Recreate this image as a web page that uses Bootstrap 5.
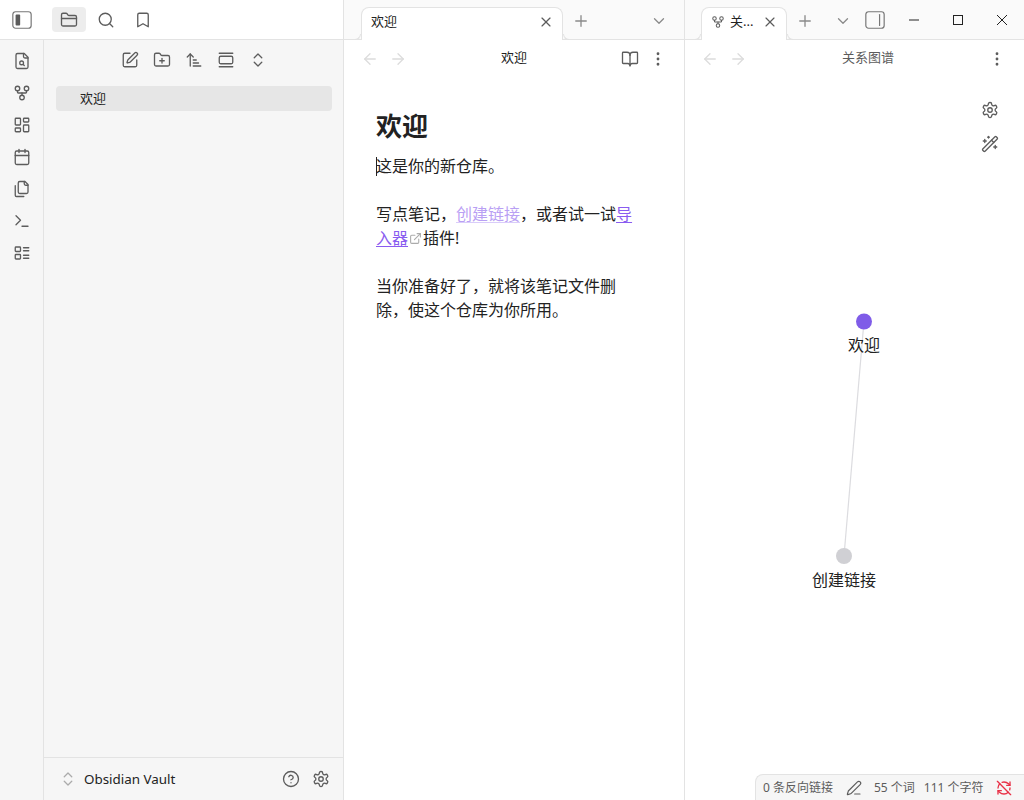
<!DOCTYPE html>
<html lang="zh-CN">
<head>
<meta charset="UTF-8">
<title>欢迎 - Obsidian Vault</title>
<link href="https://cdn.jsdelivr.net/npm/bootstrap@5.3.0/dist/css/bootstrap.min.css" rel="stylesheet">
<style>
html, body { height: 100%; overflow: hidden; }
body { font-family: "Noto Sans", "Noto Sans CJK SC", sans-serif; color: #222; background: #fff; }
.ic { width: 18px; height: 18px; fill: none; stroke: currentColor; stroke-width: 1.75; stroke-linecap: round; stroke-linejoin: round; flex: none; }
.ic-toggle { width: 22px; height: 22px; stroke-width: 1.3; color: #777; }
.toggle-fill { fill: #5c5c5c; stroke: none; }
.tool { display: inline-flex; align-items: center; justify-content: center; padding: 0; border: 0; border-radius: 4px; color: #5c5c5c; width: 26px; height: 26px; flex: none; }
.tool:hover { color: #222; }
.tool-on { background: #ededed; width: 34px; height: 25px; margin-left: 14px; }

.left-col { width: 344px; flex: none; border-right: 1px solid #e3e3e3; }
.top-left { height: 40px; flex: none; padding: 0 0 0 9px; gap: 3px; border-bottom: 1px solid #e3e3e3; }
.top-left .slot { width: 34px; }
.ribbon { width: 44px; flex: none; background: #f6f6f6; border-right: 1px solid #e3e3e3; padding-top: 8px; gap: 6px; }
.side { background: #f6f6f6; min-width: 0; }
.side-tools { height: 42px; padding-bottom: 2px; gap: 6px; }
.file-row { margin: 4px 11px 0 12px; height: 25px; padding-left: 24px; background: #e6e6e6; border-radius: 4px; font-size: 13px; }
.vault-row { height: 43px; border-top: 1px solid #e3e3e3; padding: 0 9px 0 15px; font-size: 13.4px; }
.vault-row .vault-name { margin-left: 7px; }
.vault-chev { color: #ababab; }

.pane-a { width: 341px; flex: none; border-right: 1px solid #e3e3e3; }
.pane-b { min-width: 0; flex: 1 1 auto; }
.tab-strip { height: 40px; flex: none; background: #fafafa; border-bottom: 1px solid #e3e3e3; padding-top: 7px; }
.tab-one { position: relative; height: 33px; background: #fff; border: 1px solid #e3e3e3; border-bottom: 0; border-radius: 8px 8px 0 0; font-size: 13px; padding: 0 8px 4px 9px; }
.tab-one::before, .tab-one::after { content: ""; position: absolute; bottom: 0; width: 6px; height: 6px; }
.tab-one::before { left: -7px; border-bottom: 1px solid #e3e3e3; border-right: 1px solid #e3e3e3; border-radius: 0 0 6px 0; }
.tab-one::after { right: -7px; border-bottom: 1px solid #e3e3e3; border-left: 1px solid #e3e3e3; border-radius: 0 0 0 6px; }
.tab-wide { margin-left: 17px; width: 202px; }
.tab-narrow { margin-left: 16px; width: 86px; }
.tab-fork { width: 14px; height: 14px; color: #5c5c5c; margin-right: 5px; }
.tab-x { color: #5c5c5c; width: 16px; height: 16px; }
.tab-x .ic { width: 16px; height: 16px; }
.strip-btn { color: #8a8a8a; margin-top: 1px; }
.strip-plus { margin-left: 5px; }
.strip-chev-a { margin-left: auto; margin-right: 12px; }
.strip-chev-b { margin-left: 12px; }
.strip-toggle { margin-left: 6px; }
.win-group { margin-top: -7px; }
.win-btn { color: #222; width: 44px; height: 40px; }
.view-head { height: 38px; flex: none; font-size: 13px; }
.pane-a .view-head { padding: 0 13px 0 17px; }
.pane-b .view-head { padding: 0 14px 0 16px; }
.view-title { flex: 1 1 auto; text-align: center; padding-bottom: 2px; }
.pane-a .view-title { padding-left: 4px; }
.pane-b .view-title { color: #5c5c5c; padding-left: 5px; }
.arrow-off { color: #dcdcdc; }
.arrow-next { margin-left: 10px; }
.more-gap { margin-left: 2px; }
.note { padding: 31px 0 0 32px; width: 292px; font-size: 16px; line-height: 24px; color: #222; }
.note h1 { font-size: 26px; font-weight: 700; line-height: 34px; margin: 0 0 11px; }
.note p { margin: 0 0 24px; }
.caret-line { display: inline-block; width: 1px; height: 19px; background: #222; margin-right: -1px; vertical-align: -4px; }
.link-new { color: #b9a0f4; text-decoration: underline; text-decoration-color: #d9ccfa; text-underline-offset: 2px; }
.link-out { color: #8a5cf0; text-decoration: underline; text-underline-offset: 2px; }
.out-ic { width: 13px; height: 13px; color: #ababab; stroke-width: 2; vertical-align: -1px; margin: 0 1px; }
.graph-wrap { position: relative; flex: 1 1 auto; min-height: 0; }
.graph-svg { position: absolute; left: 0; top: 0; width: 100%; height: 100%; }
.graph-svg text { font-size: 16px; fill: #222; text-anchor: middle; font-family: "Noto Sans CJK SC", sans-serif; }
.graph-ctl { position: absolute; top: 19px; right: 21px; gap: 8px; }
.status-line { position: absolute; right: 0; bottom: 0; height: 26px; width: 269px; background: #f6f6f6; border-top: 1px solid #e3e3e3; border-left: 1px solid #e3e3e3; border-radius: 8px 0 0 0; font-size: 12px; color: #5c5c5c; padding-left: 7px; white-space: nowrap; }
.status-line .ic { width: 16px; height: 16px; }
.st-pencil { margin: 0 12px 0 13px; }
.st-count { margin-left: 9px; }
.sync-off { color: #e93147; margin-left: 12px; stroke-width: 2; }
</style>
</head>
<body>
<svg width="0" height="0" class="d-none">
  <symbol id="i-folder" viewBox="0 0 24 24"><path d="M20 20a2 2 0 0 0 2-2V8a2 2 0 0 0-2-2h-7.9a2 2 0 0 1-1.69-.9L9.6 3.9A2 2 0 0 0 7.93 3H4a2 2 0 0 0-2 2v13a2 2 0 0 0 2 2Z"/><path d="M2 10h20"/></symbol>
  <symbol id="i-search" viewBox="0 0 24 24"><circle cx="11" cy="11" r="8"/><path d="m21 21-4.3-4.3"/></symbol>
  <symbol id="i-bookmark" viewBox="0 0 24 24"><path d="m19 21-7-4-7 4V5a2 2 0 0 1 2-2h10a2 2 0 0 1 2 2v16z"/></symbol>
  <symbol id="i-edit" viewBox="0 0 24 24"><path d="M12 3H5a2 2 0 0 0-2 2v14a2 2 0 0 0 2 2h14a2 2 0 0 0 2-2v-7"/><path d="M18.375 2.625a1 1 0 0 1 3 3l-9.013 9.014a2 2 0 0 1-.853.505l-2.873.84a.5.5 0 0 1-.62-.62l.84-2.873a2 2 0 0 1 .506-.852z"/></symbol>
  <symbol id="i-folder-plus" viewBox="0 0 24 24"><path d="M12 10v6"/><path d="M9 13h6"/><path d="M20 20a2 2 0 0 0 2-2V8a2 2 0 0 0-2-2h-7.9a2 2 0 0 1-1.69-.9L9.6 3.9A2 2 0 0 0 7.93 3H4a2 2 0 0 0-2 2v13a2 2 0 0 0 2 2Z"/></symbol>
  <symbol id="i-sort" viewBox="0 0 24 24"><path d="m3 8 4-4 4 4"/><path d="M7 4v16"/><path d="M11 12h4"/><path d="M11 16h7"/><path d="M11 20h10"/></symbol>
  <symbol id="i-reveal" viewBox="0 0 24 24"><path d="M3 3h18"/><path d="M3 21h18"/><rect x="3" y="7" width="18" height="10" rx="2"/></symbol>
  <symbol id="i-updown" viewBox="0 0 24 24"><path d="m7 15 5 5 5-5"/><path d="m7 9 5-5 5 5"/></symbol>
  <symbol id="i-file-search" viewBox="0 0 24 24"><path d="M15 2H6a2 2 0 0 0-2 2v16a2 2 0 0 0 2 2h12a2 2 0 0 0 2-2V7z"/><path d="M14 2v4a2 2 0 0 0 2 2h4"/><circle cx="11.5" cy="14.5" r="2.5"/><path d="m13.5 16.5 1.5 1.5"/></symbol>
  <symbol id="i-fork" viewBox="0 0 24 24"><circle cx="12" cy="18" r="3"/><circle cx="6" cy="6" r="3"/><circle cx="18" cy="6" r="3"/><path d="M18 9v2c0 .6-.4 1-1 1H7c-.6 0-1-.4-1-1V9"/><path d="M12 12v3"/></symbol>
  <symbol id="i-dash" viewBox="0 0 24 24"><rect x="3" y="3" width="7" height="9" rx="1"/><rect x="14" y="3" width="7" height="5" rx="1"/><rect x="14" y="12" width="7" height="9" rx="1"/><rect x="3" y="16" width="7" height="5" rx="1"/></symbol>
  <symbol id="i-cal" viewBox="0 0 24 24"><path d="M8 2v4"/><path d="M16 2v4"/><rect x="3" y="4" width="18" height="18" rx="2"/><path d="M3 10h18"/></symbol>
  <symbol id="i-files" viewBox="0 0 24 24"><path d="M20 7h-3a2 2 0 0 1-2-2V2"/><path d="M9 18a2 2 0 0 1-2-2V4a2 2 0 0 1 2-2h7l4 4v10a2 2 0 0 1-2 2Z"/><path d="M3 7.6v12.8A1.6 1.6 0 0 0 4.6 22h9.8"/></symbol>
  <symbol id="i-term" viewBox="0 0 24 24"><path d="m4 17 6-6-6-6"/><path d="M12 19h8"/></symbol>
  <symbol id="i-todo" viewBox="0 0 24 24"><rect x="3" y="4" width="7" height="6" rx="1"/><rect x="3" y="14" width="7" height="6" rx="1"/><path d="M14 5h7"/><path d="M14 9h7"/><path d="M14 15h7"/><path d="M14 19h7"/></symbol>
  <symbol id="i-x" viewBox="0 0 24 24"><path d="M18 6 6 18"/><path d="m6 6 12 12"/></symbol>
  <symbol id="i-plus" viewBox="0 0 24 24"><path d="M5 12h14"/><path d="M12 5v14"/></symbol>
  <symbol id="i-chev" viewBox="0 0 24 24"><path d="m6 9 6 6 6-6"/></symbol>
  <symbol id="i-left" viewBox="0 0 24 24"><path d="m12 19-7-7 7-7"/><path d="M19 12H5"/></symbol>
  <symbol id="i-right" viewBox="0 0 24 24"><path d="M5 12h14"/><path d="m12 5 7 7-7 7"/></symbol>
  <symbol id="i-book" viewBox="0 0 24 24"><path d="M12 7v14"/><path d="M3 18a1 1 0 0 1-1-1V4a1 1 0 0 1 1-1h5a4 4 0 0 1 4 4 4 4 0 0 1 4-4h5a1 1 0 0 1 1 1v13a1 1 0 0 1-1 1h-6a3 3 0 0 0-3 3 3 3 0 0 0-3-3z"/></symbol>
  <symbol id="i-more" viewBox="0 0 24 24"><circle cx="12" cy="12" r="1"/><circle cx="12" cy="5" r="1"/><circle cx="12" cy="19" r="1"/></symbol>
  <symbol id="i-gear" viewBox="0 0 24 24"><path d="M12.22 2h-.44a2 2 0 0 0-2 2v.18a2 2 0 0 1-1 1.73l-.43.25a2 2 0 0 1-2 0l-.15-.08a2 2 0 0 0-2.73.73l-.22.38a2 2 0 0 0 .73 2.73l.15.1a2 2 0 0 1 1 1.72v.51a2 2 0 0 1-1 1.74l-.15.09a2 2 0 0 0-.73 2.73l.22.38a2 2 0 0 0 2.73.73l.15-.08a2 2 0 0 1 2 0l.43.25a2 2 0 0 1 1 1.73V20a2 2 0 0 0 2 2h.44a2 2 0 0 0 2-2v-.18a2 2 0 0 1 1-1.73l.43-.25a2 2 0 0 1 2 0l.15.08a2 2 0 0 0 2.73-.73l.22-.39a2 2 0 0 0-.73-2.73l-.15-.08a2 2 0 0 1-1-1.74v-.5a2 2 0 0 1 1-1.74l.15-.09a2 2 0 0 0 .73-2.73l-.22-.38a2 2 0 0 0-2.73-.73l-.15.08a2 2 0 0 1-2 0l-.43-.25a2 2 0 0 1-1-1.73V4a2 2 0 0 0-2-2z"/><circle cx="12" cy="12" r="3"/></symbol>
  <symbol id="i-wand" viewBox="0 0 24 24"><path d="m21.64 3.64-1.28-1.28a1.21 1.21 0 0 0-1.72 0L2.36 18.64a1.21 1.21 0 0 0 0 1.72l1.28 1.28a1.2 1.2 0 0 0 1.72 0L21.64 5.36a1.2 1.2 0 0 0 0-1.72"/><path d="m14 7 3 3"/><path d="M5 6v4"/><path d="M19 14v4"/><path d="M10 2v2"/><path d="M7 8H3"/><path d="M21 16h-4"/><path d="M11 3H9"/></symbol>
  <symbol id="i-help" viewBox="0 0 24 24"><circle cx="12" cy="12" r="10"/><path d="M9.09 9a3 3 0 0 1 5.83 1c0 2-3 3-3 3"/><path d="M12 17h.01"/></symbol>
  <symbol id="i-pencil" viewBox="0 0 24 24"><path d="M13 21h8"/><path d="M21.174 6.812a1 1 0 0 0-3.986-3.987L3.842 16.174a2 2 0 0 0-.5.83l-1.321 4.352a.5.5 0 0 0 .623.622l4.353-1.32a2 2 0 0 0 .83-.497z"/></symbol>
  <symbol id="i-sync-off" viewBox="0 0 24 24"><path d="M21 8 18.74 5.74A9.75 9.75 0 0 0 12 3c-1 0-1.97.16-2.87.47"/><path d="M8 16H3v5"/><path d="M3 12c0-2.49 1-4.74 2.64-6.36"/><path d="m3 16 2.26 2.26A9.75 9.75 0 0 0 12 21c2.49 0 4.74-1 6.36-2.64"/><path d="M21 12c0 1-.16 1.97-.47 2.87"/><path d="M21 3v5h-5"/><path d="M22 22 2 2"/></symbol>
  <symbol id="i-ext" viewBox="0 0 24 24"><path d="M15 3h6v6"/><path d="M10 14 21 3"/><path d="M18 13v6a2 2 0 0 1-2 2H5a2 2 0 0 1-2-2V8a2 2 0 0 1 2-2h6"/></symbol>
</svg>

<div class="d-flex h-100">
  <!-- left: ribbon + file explorer -->
  <div class="left-col d-flex flex-column">
    <div class="top-left d-flex align-items-center">
      <button class="btn tool" type="button">
        <svg class="ic ic-toggle" viewBox="0 0 24 24"><rect x="2" y="3" width="20" height="18" rx="3"/><rect class="toggle-fill" x="5" y="6" width="5" height="12" rx="1"/></svg>
      </button>
      <button class="btn tool tool-on" type="button"><svg class="ic"><use href="#i-folder"/></svg></button>
      <button class="btn tool slot" type="button"><svg class="ic"><use href="#i-search"/></svg></button>
      <button class="btn tool slot" type="button"><svg class="ic"><use href="#i-bookmark"/></svg></button>
    </div>
    <div class="d-flex flex-grow-1 overflow-hidden">
      <div class="ribbon d-flex flex-column align-items-center">
        <button class="btn tool" type="button"><svg class="ic"><use href="#i-file-search"/></svg></button>
        <button class="btn tool" type="button"><svg class="ic"><use href="#i-fork"/></svg></button>
        <button class="btn tool" type="button"><svg class="ic"><use href="#i-dash"/></svg></button>
        <button class="btn tool" type="button"><svg class="ic"><use href="#i-cal"/></svg></button>
        <button class="btn tool" type="button"><svg class="ic"><use href="#i-files"/></svg></button>
        <button class="btn tool" type="button"><svg class="ic"><use href="#i-term"/></svg></button>
        <button class="btn tool" type="button"><svg class="ic"><use href="#i-todo"/></svg></button>
      </div>
      <div class="side d-flex flex-column flex-grow-1">
        <div class="side-tools d-flex align-items-center justify-content-center">
          <button class="btn tool" type="button"><svg class="ic"><use href="#i-edit"/></svg></button>
          <button class="btn tool" type="button"><svg class="ic"><use href="#i-folder-plus"/></svg></button>
          <button class="btn tool" type="button"><svg class="ic"><use href="#i-sort"/></svg></button>
          <button class="btn tool" type="button"><svg class="ic"><use href="#i-reveal"/></svg></button>
          <button class="btn tool" type="button"><svg class="ic"><use href="#i-updown"/></svg></button>
        </div>
        <div class="file-row d-flex align-items-center">欢迎</div>
        <div class="vault-row d-flex align-items-center mt-auto">
          <svg class="ic vault-chev"><use href="#i-updown"/></svg>
          <span class="vault-name flex-grow-1">Obsidian Vault</span>
          <button class="btn tool me-1" type="button"><svg class="ic"><use href="#i-help"/></svg></button>
          <button class="btn tool" type="button"><svg class="ic"><use href="#i-gear"/></svg></button>
        </div>
      </div>
    </div>
  </div>

  <!-- note pane -->
  <div class="pane-a d-flex flex-column">
    <div class="tab-strip d-flex align-items-start">
      <div class="tab-one tab-wide d-flex align-items-center justify-content-between">
        <span>欢迎</span>
        <button class="btn tool tab-x" type="button"><svg class="ic"><use href="#i-x"/></svg></button>
      </div>
      <button class="btn tool strip-btn strip-plus" type="button"><svg class="ic"><use href="#i-plus"/></svg></button>
      <button class="btn tool strip-btn strip-chev-a" type="button"><svg class="ic"><use href="#i-chev"/></svg></button>
    </div>
    <div class="view-head d-flex align-items-center">
      <svg class="ic arrow-off"><use href="#i-left"/></svg>
      <svg class="ic arrow-off arrow-next"><use href="#i-right"/></svg>
      <span class="view-title">欢迎</span>
      <button class="btn tool" type="button"><svg class="ic"><use href="#i-book"/></svg></button>
      <button class="btn tool more-gap" type="button"><svg class="ic"><use href="#i-more"/></svg></button>
    </div>
    <div class="note">
      <h1>欢迎</h1>
      <p><span class="caret-line"></span>这是你的新仓库。</p>
      <p>写点笔记，<a class="link-new" href="#">创建链接</a>，或者试一试<a class="link-out" href="#">导入器</a><svg class="ic out-ic"><use href="#i-ext"/></svg>插件!</p>
      <p>当你准备好了，就将该笔记文件删除，使这个仓库为你所用。</p>
    </div>
  </div>

  <!-- graph pane -->
  <div class="pane-b d-flex flex-column">
    <div class="tab-strip d-flex align-items-start">
      <div class="tab-one tab-narrow d-flex align-items-center">
        <svg class="ic tab-fork"><use href="#i-fork"/></svg>
        <span class="flex-grow-1">关...</span>
        <button class="btn tool tab-x" type="button"><svg class="ic"><use href="#i-x"/></svg></button>
      </div>
      <button class="btn tool strip-btn strip-plus" type="button"><svg class="ic"><use href="#i-plus"/></svg></button>
      <button class="btn tool strip-btn strip-chev-b" type="button"><svg class="ic"><use href="#i-chev"/></svg></button>
      <button class="btn tool strip-toggle" type="button">
        <svg class="ic ic-toggle" viewBox="0 0 24 24"><rect x="2" y="3" width="20" height="18" rx="3"/><path d="M17 6v12"/></svg>
      </button>
      <div class="win-group d-flex ms-auto">
        <button class="btn tool win-btn" type="button"><svg width="12" height="12"><path d="M1 6h10" stroke="currentColor" fill="none"/></svg></button>
        <button class="btn tool win-btn" type="button"><svg width="12" height="12"><rect x="1.5" y="1.5" width="9" height="9" stroke="currentColor" fill="none"/></svg></button>
        <button class="btn tool win-btn" type="button"><svg width="12" height="12"><path d="M1 1l10 10M11 1 1 11" stroke="currentColor" fill="none"/></svg></button>
      </div>
    </div>
    <div class="view-head d-flex align-items-center">
      <svg class="ic arrow-off"><use href="#i-left"/></svg>
      <svg class="ic arrow-off arrow-next"><use href="#i-right"/></svg>
      <span class="view-title">关系图谱</span>
      <button class="btn tool" type="button"><svg class="ic"><use href="#i-more"/></svg></button>
    </div>
    <div class="graph-wrap">
      <svg class="graph-svg">
        <line x1="179" y1="243" x2="159" y2="478" stroke="#dcdce0" stroke-width="1.2"/>
        <circle cx="179" cy="243.500" r="8" fill="#7f5ce8"/>
        <circle cx="159" cy="478" r="8" fill="#d0d0d4"/>
        <text x="179" y="273">欢迎</text>
        <text x="159" y="508">创建链接</text>
      </svg>
      <div class="graph-ctl d-flex flex-column">
        <button class="btn tool" type="button"><svg class="ic"><use href="#i-gear"/></svg></button>
        <button class="btn tool" type="button"><svg class="ic"><use href="#i-wand"/></svg></button>
      </div>
    </div>
  </div>
</div>

<div class="status-line d-flex align-items-center">
  <span>0 条反向链接</span>
  <svg class="ic st-pencil"><use href="#i-pencil"/></svg>
  <span>55 个词</span>
  <span class="st-count">111 个字符</span>
  <svg class="ic sync-off"><use href="#i-sync-off"/></svg>
</div>
<script src="https://cdn.jsdelivr.net/npm/bootstrap@5.3.0/dist/js/bootstrap.bundle.min.js"></script>
</body>
</html>
